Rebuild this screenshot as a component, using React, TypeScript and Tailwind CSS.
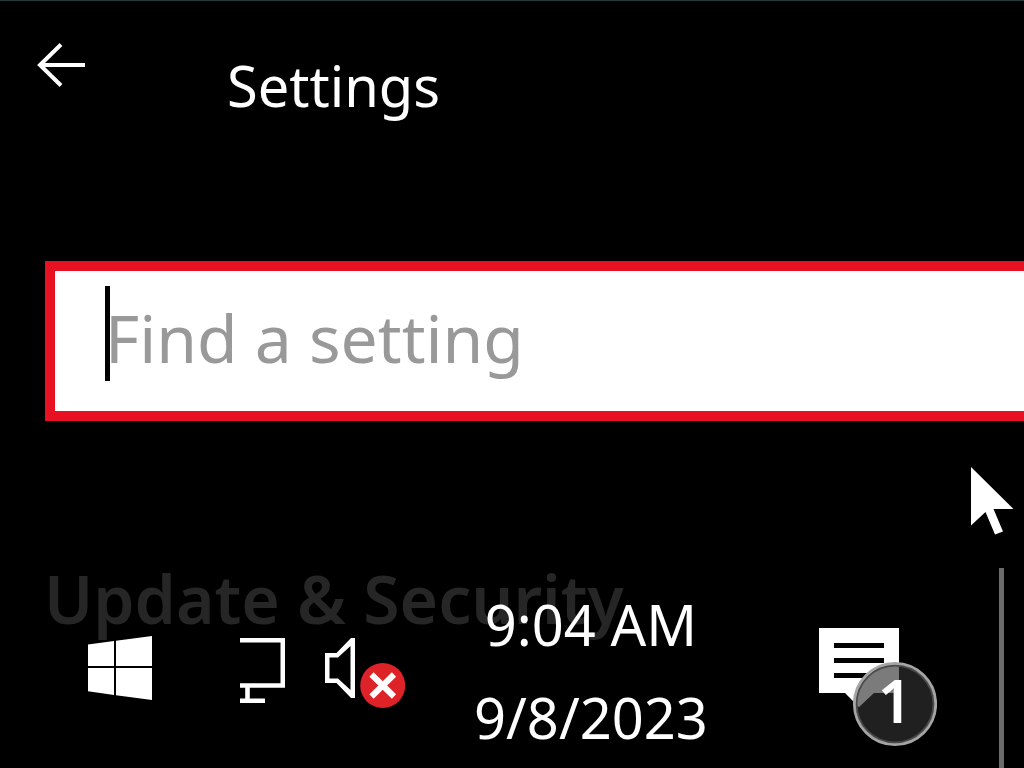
import React, { useState } from 'react';

const BackArrow = () => (
  <svg width="48" height="44" viewBox="0 0 48 44" fill="none" stroke="white" strokeWidth="4" aria-hidden="true">
    <path d="M24 1.5 3 22l21 20.5M3 22h45" />
  </svg>
);

const WindowsLogo = () => (
  <svg width="64" height="120" viewBox="0 0 64 120" fill="white" aria-hidden="true">
    <path d="M0 16.6 26 13v25H0zM28 12.7 64 8v30H28zM0 40h26v27L0 63.3zM28 40h36v32l-36-4.8z" />
  </svg>
);

const NetworkIcon = () => (
  <svg width="45" height="120" viewBox="0 0 45 120" fill="none" stroke="white" aria-hidden="true">
    <path d="M0 12.2h42.8v45.3H0" strokeWidth="4.6" />
    <path d="M7.5 58v14M0 72.8h25" strokeWidth="4.6" />
  </svg>
);

const VolumeIcon = () => (
  <svg width="80" height="120" viewBox="0 0 80 120" fill="white" aria-hidden="true">
    <path
      fillRule="evenodd"
      d="M0 25h11.5L26 10h4v60h-4L11.5 55H0zM4.5 29.5v21H13l12.5 11.5V18L13 29.5z"
    />
    <circle cx="57.7" cy="57.5" r="22.5" fill="#dd2228" />
    <path d="m46.5 46.5 22.5 22M69 46.5l-22.5 22" stroke="white" strokeWidth="6" />
  </svg>
);

const NotificationIcon = () => (
  <svg width="118" height="120" viewBox="0 0 118 120" aria-hidden="true">
    <path d="M0 0h80v65H54L40 79 26 65H0z" fill="white" />
    <path d="M15 15h50v5H15zM15 30h50v5H15zM15 45h50v5H15z" fill="black" />
    <circle cx="76" cy="76" r="41" fill="#202020" />
    <path d="M80 35.2v29.8H55L40 79l-4.5-2A41 41 0 0 1 80 35.2z" fill="#7b7b7b" />
    <circle cx="76" cy="76" r="38.5" fill="none" stroke="#4a4a4a" strokeWidth="2" />
    <circle cx="76" cy="76" r="40.7" fill="none" stroke="#a5a5a5" strokeWidth="2.8" />
  </svg>
);

const Pointer = () => (
  <svg width="43" height="68" viewBox="0 0 43 68" fill="white" aria-hidden="true">
    <path d="M0 0v58.5L14.5 45 24 67.5l8-3L22.5 42H42.5z" />
  </svg>
);

const Taskbar = () => (
  <footer className="absolute inset-x-0 bottom-0 flex items-start pr-[87px] pb-1 pl-[88px]">
    <button type="button" aria-label="Start" className="mt-[50px]">
      <WindowsLogo />
    </button>
    <button type="button" aria-label="Network" className="mt-[50px] ml-[88px]">
      <NetworkIcon />
    </button>
    <button type="button" aria-label="Volume" className="mt-[50px] ml-10">
      <VolumeIcon />
    </button>
    <button type="button" className="ml-[69px] text-center text-[56px] leading-[93px] whitespace-nowrap">
      <span className="block">9:04 AM</span>
      <span className="block">9/8/2023</span>
    </button>
    <button type="button" aria-label="Notifications" className="relative mt-[50px] ml-auto">
      <NotificationIcon />
      <span className="absolute right-0 bottom-0 flex size-[88px] items-center justify-center pb-2 pl-1 text-[60px] leading-none font-semibold">
        1
      </span>
    </button>
  </footer>
);

const App: React.FC = () => {
  const [query, setQuery] = useState('');

  return (
    <div className="relative flex min-h-screen flex-col overflow-hidden border-t border-[#26383a] bg-black font-['Noto_Sans',sans-serif] text-white">
      <header className="flex items-start pt-[42px] pl-[37px]">
        <button type="button" aria-label="Back">
          <BackArrow />
        </button>
        <h1 className="ml-[142px] text-[56px] leading-[84px]">Settings</h1>
      </header>

      {/* Search box, runs off the right edge */}
      <div className="relative mt-[134px] ml-[45px] border-10 border-r-0 border-[#e81123] bg-white">
        <input
          type="text"
          aria-label="Find a setting"
          placeholder="Find a setting"
          value={query}
          onChange={(e) => setQuery(e.target.value)}
          className="block h-[140px] w-full bg-transparent pb-2 pl-[50px] text-[66px] text-black placeholder:text-[#999999] focus:outline-none"
        />
        <span className="absolute top-[15px] left-[50px] h-[95px] w-[5px] bg-black" />
      </div>

      <main className="mt-[147px] flex flex-1 items-stretch justify-between pr-5 pl-11">
        <h2 className="text-[66px] leading-[60px] font-semibold text-[#262626]">Update &amp; Security</h2>
        <div className="w-[5px] bg-[#6b6b6b]" />
      </main>

      <Taskbar />

      <div className="pointer-events-none absolute top-[466px] right-[10px]">
        <Pointer />
      </div>
    </div>
  );
};

export default App;
